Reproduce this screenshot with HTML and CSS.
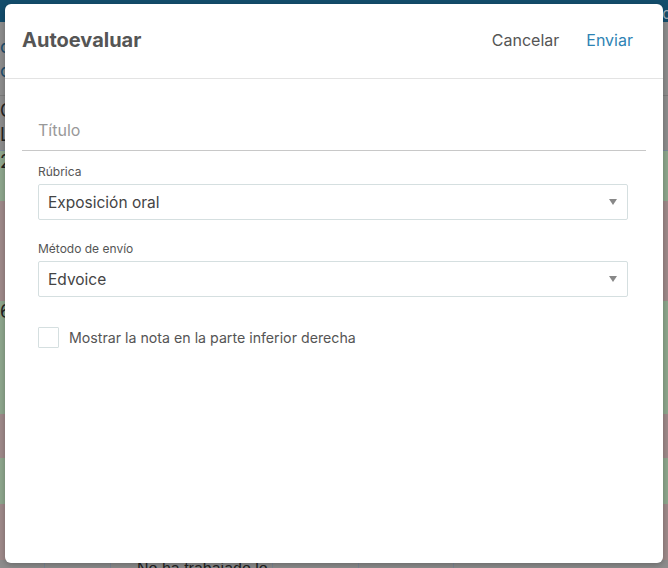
FILE: index.html
```html
<!DOCTYPE html>
<html lang="es">
<head>
<meta charset="utf-8">
<title>Autoevaluar</title>
<link rel="stylesheet" href="styles.css">
</head>
<body>
<div class="page">
  <div class="nav">
    <span class="nav-item">Pestañas ▾</span>
    <span class="nav-item">Programación</span>
    <span class="nav-item">Comunic</span>
  </div>
  <div class="sub sub-a"><span>d</span><span>c</span></div>
  <div class="sub sub-b"><span>C</span><span>L</span></div>
  <div class="band green"><span>2</span></div>
  <div class="band rose tall"></div>
  <div class="band green mid"><span>6</span></div>
  <div class="band rose short"></div>
  <div class="band green short2"></div>
  <div class="band rose last"></div>
  <div class="band table"><span class="cell c1"></span><span class="cell c2">No ha trabajado lo</span><span class="cell c3"></span><span class="cell c4"></span><span class="cell c5"></span></div>
</div>

<div class="modal">
  <div class="modal-header">
    <h1 class="modal-title">Autoevaluar</h1>
    <div class="actions">
      <button class="btn btn-cancel">Cancelar</button>
      <button class="btn btn-send">Enviar</button>
    </div>
  </div>
  <div class="modal-body">
    <div class="title-field">
      <input class="title-input" type="text" placeholder="Título">
    </div>
    <div class="fields">
      <div class="field">
        <label class="field-label">Rúbrica</label>
        <div class="select"><span>Exposición oral</span><span class="arrow"></span></div>
      </div>
      <div class="field">
        <label class="field-label">Método de envío</label>
        <div class="select"><span>Edvoice</span><span class="arrow"></span></div>
      </div>
      <label class="check">
        <span class="box"></span>
        <span class="check-text">Mostrar la nota en la parte inferior derecha</span>
      </label>
    </div>
  </div>
</div>
</body>
</html>
```

FILE: styles.css
```css
html, body {
  margin: 0;
  padding: 0;
  height: 100%;
  overflow: hidden;
}
body {
  font-family: Inter, Roboto, "Liberation Sans", sans-serif;
  background: #8e8e8e;
}
.page {
  display: flex;
  flex-direction: column;
  height: 568px;
  width: 668px;
}
.nav {
  height: 22px;
  background: #134d6c;
  display: flex;
  gap: 48px;
  padding-left: 336px;
  align-items: flex-end;
  color: #9db0bc;
  font-size: 15px;
  line-height: 16px;
  overflow: hidden;
  flex-shrink: 0;
}
.nav-item { white-space: nowrap; }
.sub {
  background: #8d8d8d;
  display: flex;
  flex-direction: column;
  justify-content: center;
  font-size: 18px;
  color: #1c4d6e;
  flex-shrink: 0;
  overflow: hidden;
}
.sub-a { height: 73px; border-bottom: 1px solid #7c7c7c; line-height: 24px; }
.sub-b { height: 54px; color: #222; line-height: 24px; border-bottom: 1px solid #7c8a9a; }
.band {
  flex-shrink: 0;
  font-size: 18px;
  color: #222;
  overflow: hidden;
}
.green { background: #8ea78d; height: 50px; }
.rose { background: #9f8a8a; }
.tall { height: 100px; }
.mid { height: 113px; }
.short { height: 44px; }
.short2 { height: 46px; }
.last { height: 56px; }
.table {
  flex: 1;
  background: #8d8d8d;
  display: flex;
}
.cell {
  border-left: 1px solid #7d8794;
  height: 100%;
  font-family: "Liberation Sans", sans-serif;
  font-size: 16px;
  color: #222;
  white-space: nowrap;
  box-sizing: border-box;
}
.c1 { margin-left: 44px; width: 66px; }
.c2 { width: 162px; padding-left: 26px; }
.c3 { width: 86px; }
.c4 { width: 95px; }
.c5 { flex: 1; }

.modal {
  position: absolute;
  left: 5px;
  top: 4px;
  width: 658px;
  height: 559px;
  background: #fff;
  border-radius: 6px;
  box-shadow: 0 2px 6px rgba(0,0,0,0.25);
  display: flex;
  flex-direction: column;
  overflow: hidden;
}
.modal-header {
  height: 75px;
  flex-shrink: 0;
  box-sizing: border-box;
  border-bottom: 1px solid #e3e3e3;
  display: flex;
  align-items: center;
  justify-content: space-between;
  padding: 0 30px 2px 17px;
}
.modal-title {
  margin: 0;
  font-size: 20px;
  font-weight: 700;
  color: #555;
}
.actions {
  display: flex;
  gap: 27px;
  align-items: center;
}
.btn {
  border: none;
  background: none;
  padding: 0;
  font-family: inherit;
  font-size: 16px;
  cursor: pointer;
}
.btn-cancel { color: #555; }
.btn-send { color: #2d83b4; }

.modal-body {
  padding: 33px 17px 0 17px;
}
.title-field {
  border-bottom: 1px solid #c8c8c8;
  padding: 0 16px;
}
.title-input {
  border: none;
  outline: none;
  width: 100%;
  height: 36px;
  margin-bottom: 2px;
  padding: 0;
  font-family: inherit;
  font-size: 16px;
  color: #444;
  background: transparent;
}
.title-input::placeholder { color: #999; }
.fields {
  padding: 13px 18px 0 16px;
  display: flex;
  flex-direction: column;
}
.field {
  display: flex;
  flex-direction: column;
  margin-bottom: 21px;
}
.field-label {
  font-size: 12px;
  color: #555;
  line-height: 16px;
  margin-bottom: 4px;
}
.select {
  height: 36px;
  box-sizing: border-box;
  border: 1px solid #d5dfe0;
  border-radius: 2px;
  display: flex;
  align-items: center;
  justify-content: space-between;
  padding: 0 9px 0 9px;
  font-size: 15.5px;
  color: #444;
}
.arrow {
  width: 0;
  height: 0;
  border-left: 4px solid transparent;
  border-right: 4px solid transparent;
  border-top: 6px solid #888;
  margin-right: 1px;
}
.check {
  display: flex;
  align-items: center;
  gap: 10px;
  margin-top: 9px;
}
.box {
  width: 21px;
  height: 21px;
  box-sizing: border-box;
  border: 1px solid #d5dfe0;
  border-radius: 1px;
}
.check-text {
  font-size: 14.2px;
  color: #555;
}
```
